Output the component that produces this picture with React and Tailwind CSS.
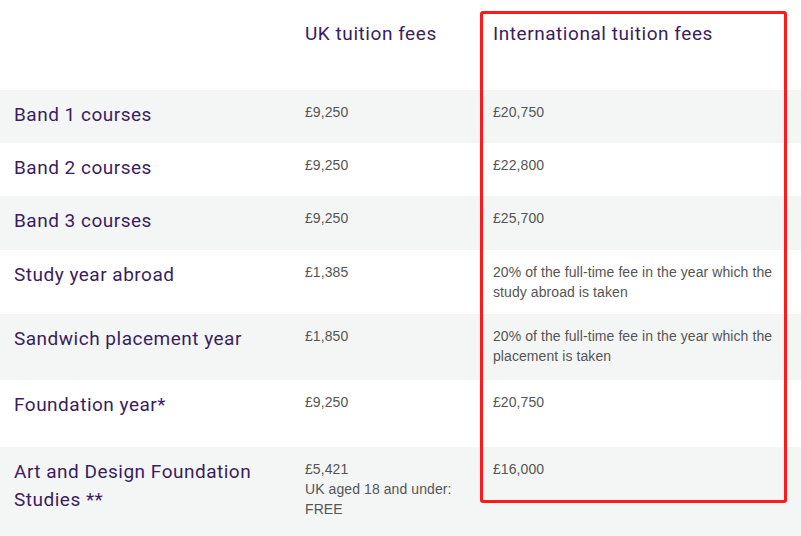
import React from "react";

const rows = [
  { label: ["Band 1 courses"], uk: ["£9,250"], intl: ["£20,750"], h: "h-[53px]", gray: true },
  { label: ["Band 2 courses"], uk: ["£9,250"], intl: ["£22,800"], h: "h-[53px]", gray: false },
  { label: ["Band 3 courses"], uk: ["£9,250"], intl: ["£25,700"], h: "h-[54px]", gray: true },
  { label: ["Study year abroad"], uk: ["£1,385"], intl: ["20% of the full-time fee in the year which the study abroad is taken"], h: "h-[64px]", gray: false },
  { label: ["Sandwich placement year"], uk: ["£1,850"], intl: ["20% of the full-time fee in the year which the placement is taken"], h: "h-[66px]", gray: true },
  { label: ["Foundation year*"], uk: ["£9,250"], intl: ["£20,750"], h: "h-[67px]", gray: false },
  { label: ["Art and Design Foundation Studies **"], uk: ["£5,421", "UK aged 18 and under: FREE"], intl: ["£16,000"], h: "h-[90px]", gray: true },
];

const labelFont = { fontFamily: "Roboto, 'Open Sans', sans-serif" };
const valueFont = { fontFamily: "'Liberation Sans', Arial, sans-serif" };

export default function App() {
  return (
    <div className="relative w-[801px] h-[536px] overflow-hidden bg-white">
      <div className="flex h-[90px]">
        <div className="w-[291px]" />
        <div className="w-[189px] pl-[14px] pt-[20px] text-[19px] leading-[28px] text-[#3a1d5e] tracking-[0.55px]" style={labelFont}>
          UK tuition fees
        </div>
        <div className="flex-1 pl-[13px] pt-[20px] text-[19px] leading-[28px] text-[#3a1d5e] tracking-[0.55px]" style={labelFont}>
          International tuition fees
        </div>
      </div>
      {rows.map((r, i) => (
        <div key={i} className={`flex ${r.h} ${r.gray ? "bg-[#f4f6f6]" : "bg-white"}`}>
          <div className="w-[291px] pl-[14px] pr-[14px] pt-[11px] text-[19px] leading-[28px] text-[#3a1d5e] tracking-[0.5px]" style={labelFont}>
            {r.label[0]}
          </div>
          <div className="w-[189px] pl-[14px] pr-[14px] pt-[12px] text-[14px] leading-[20px] text-[#555555] tracking-[0.08px]" style={valueFont}>
            {r.uk.map((t, j) => (
              <div key={j}>{t}</div>
            ))}
          </div>
          <div className="flex-1 pl-[13px] pr-[13px] pt-[12px] text-[14px] leading-[20px] text-[#555555] tracking-[0.08px]" style={valueFont}>
            {r.intl.map((t, j) => (
              <div key={j}>{t}</div>
            ))}
          </div>
        </div>
      ))}
      <div className="absolute left-[480px] top-[11px] w-[307px] h-[492px] border-[3px] border-[#ff1a1a] rounded-[3px] pointer-events-none" />
    </div>
  );
}
